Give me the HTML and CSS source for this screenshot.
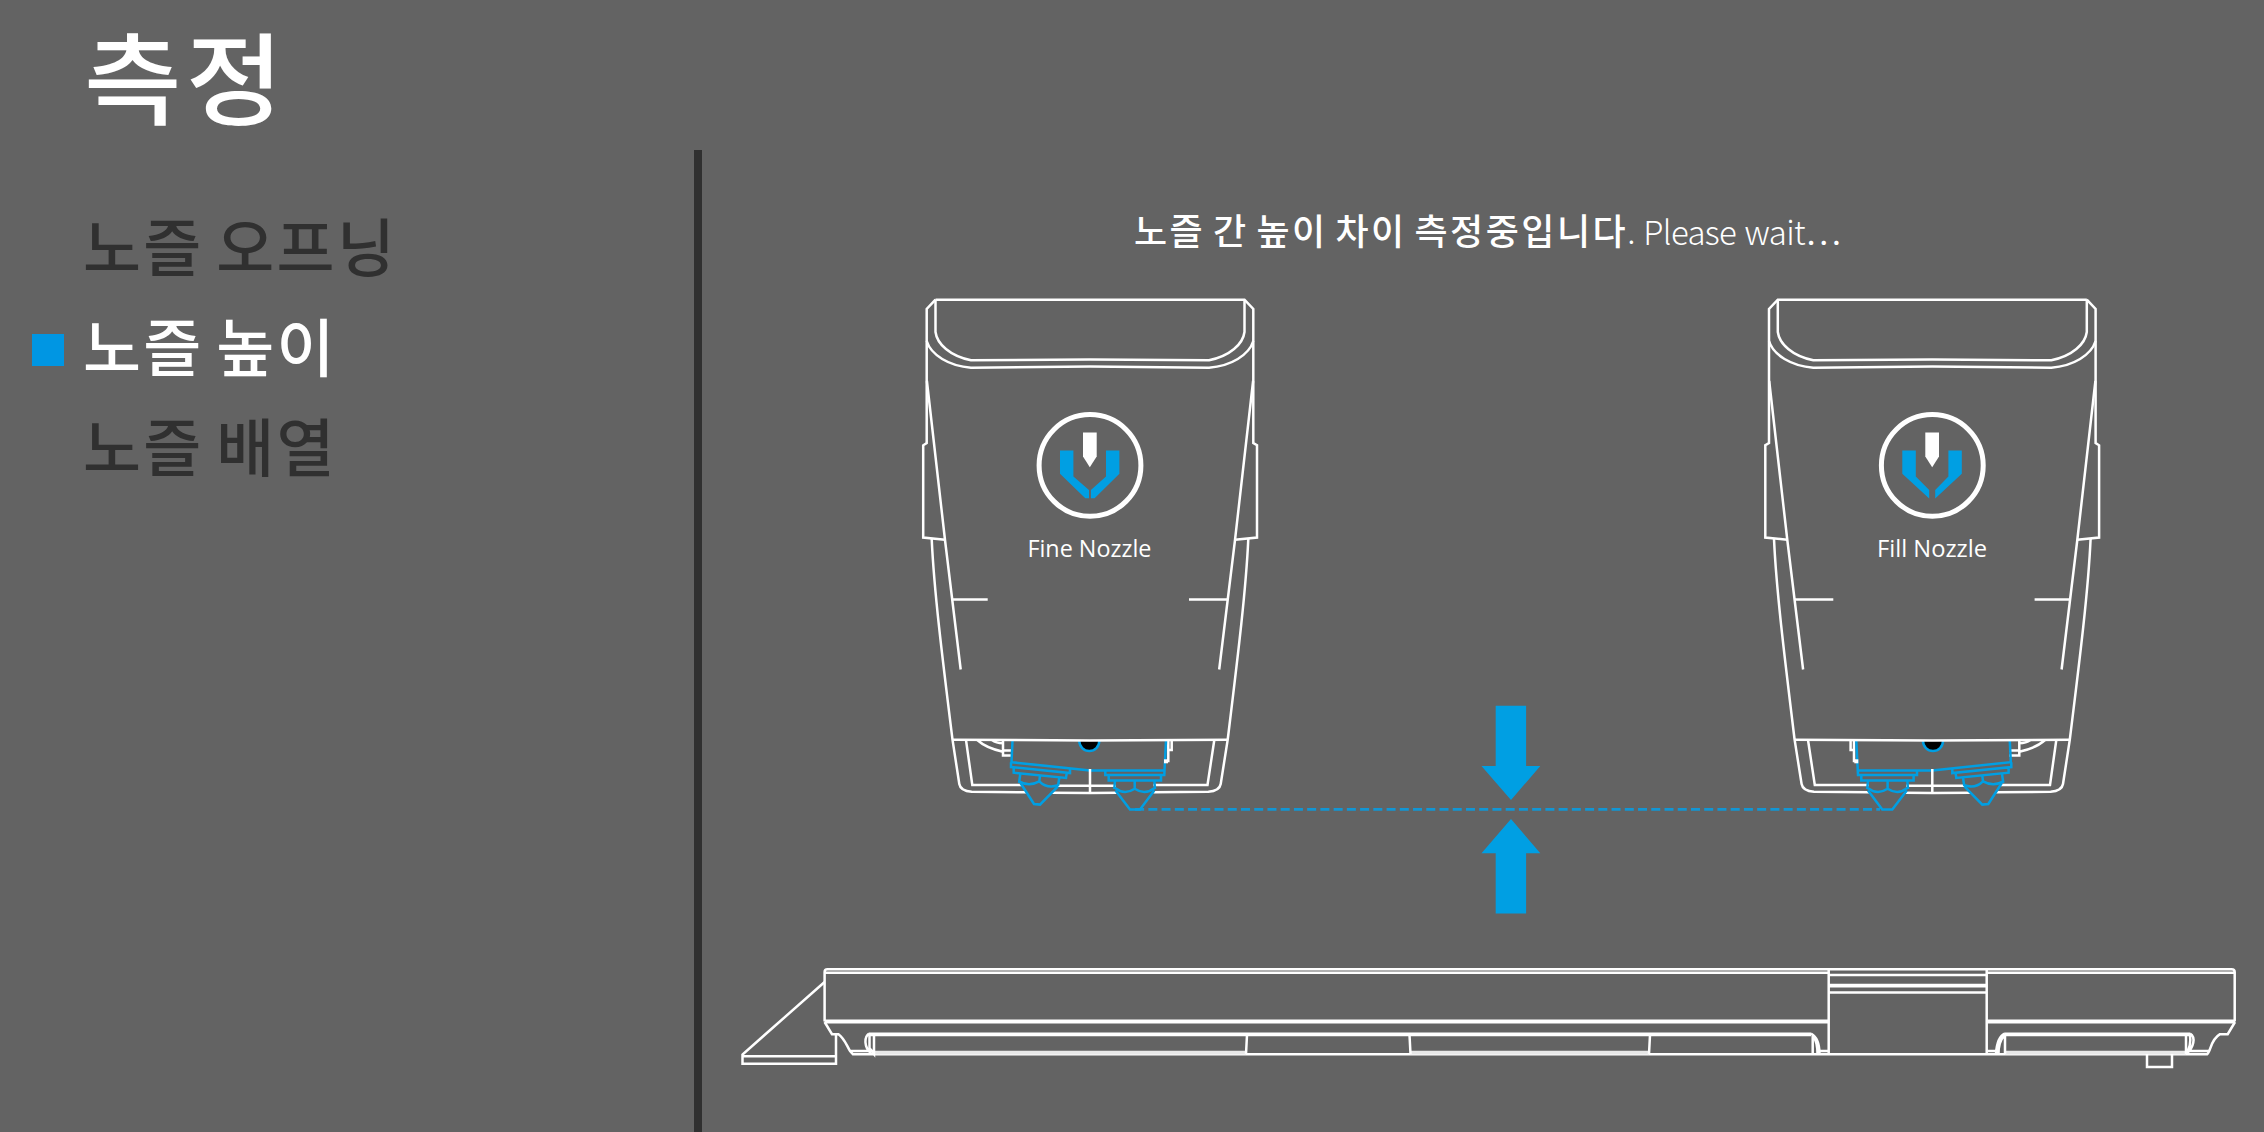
FILE: index.html
```html
<!DOCTYPE html>
<html lang="ko">
<head>
<meta charset="utf-8">
<title>측정</title>
<link rel="stylesheet" href="styles.css">
</head>
<body>
<div class="screen">
  <header class="title-bar"><h1 class="title">측정</h1></header>
  <div class="content">
    <nav class="steps">
      <ul class="step-list">
        <li class="step"><span class="marker"></span><span class="step-name">노즐 오프닝</span></li>
        <li class="step step-active"><span class="marker"></span><span class="step-name">노즐 높이</span></li>
        <li class="step"><span class="marker"></span><span class="step-name">노즐 배열</span></li>
      </ul>
    </nav>
    <main class="stage">
      <p class="status"><span class="status-ko">노즐 간 높이 차이 측정중입니다</span><span class="status-en">. Please wait<span class="dots">…</span></span></p>
      <svg class="diagram" viewBox="702 280 1562 852" width="1562" height="852">
        <defs>
          <g id="head">
            <g class="line">
              <path d="M935.5 299.7H1244.5L1253.3 309V443L1257 445.3V537.5L1235 539.7M935.5 299.7L926.7 309V443L923.2 445.3V537.5L945 539.7"/>
              <path d="M935.5 299.7V332C937 344 950 356 971 360.3L1090 359.6L1209 360.3C1230 356 1243 344 1244.5 332V299.7"/>
              <path d="M926.7 341C931 355 949 366 971 367.7L1090 366.6L1209 367.7C1231 366 1249 355 1253.3 341"/>
              <path d="M926.9 381L945 540L960.7 669.5M1253.1 381L1235 540L1219.2 669.5"/>
              <path d="M931.7 539C934 590 942 655 952.5 739.7L959.3 784Q960.5 791 971.7 791.7L1026.7 792.3M1248.3 539C1246 590 1238 655 1227.7 739.7L1220.7 784Q1219.5 791 1208.3 791.7L1153.3 792.3M1051.7 792.7L1090 793L1116.7 792.7"/>
              <path d="M952.5 599.4H987.7M1189 599.4H1227.7"/>
              <path d="M966 740L972.3 785H1022.3M1214.3 740L1207.5 785H1153.3M1057.7 785.8H1116"/>
              <path d="M977.3 740Q986 748 1003 751.7M992 740Q996 743 1003 743.3M1003 740V755.6H1013M1003 750.6H1013M1171.7 741V750H1169M1168.3 741V761H1164.5"/>
            </g>
            <path d="M1079.3 741A10 10 0 0 0 1099.3 741Z" fill="#000"/>
            <g class="blue-line">
              <path d="M1079.3 741A10 10 0 0 0 1099.3 741"/>
              <path d="M1012.5 741L1011.5 762.2L1090 770.4H1164.7M1166 741L1164.3 775H1105.3V770.4"/>
              <path d="M1011 762.2V767L1070 773V769M1013.7 767.5V772.7L1066 778L1066.7 773"/>
              <path d="M1020.3 774L1019 783M1059.3 777.7L1058 786M1040 775.7L1039.3 781.3M1019 781.3Q1029 787 1039.3 781.3Q1047 789 1058 785.3"/>
              <path d="M1020.5 783L1034 804L1040 804.6L1058 786.3"/>
              <path d="M1108.7 775V780.4H1161V775"/>
              <path d="M1115 780.4L1114.3 789M1154.3 780.4L1155 789M1134.7 780.4V788.7M1115 788Q1124.5 795.5 1134.7 788.7Q1145 795.5 1154.7 788"/>
              <path d="M1115.5 790.5L1130 809.4H1140L1154.3 790.5"/>
            </g>
            <path class="line" d="M952.5 739.7L1090 740.4L1227.7 739.7M1090 769V793"/>
            <path class="line joint" d="M1164 761.3H1168"/>
          </g>
        </defs>

        <path class="guide" d="M1135.1 809.4H1880"/>
        <use href="#head"/>
        <use href="#head" transform="translate(3022.3 0) scale(-1 1)"/>

        <g>
          <circle class="ring" cx="1090" cy="465.4" r="50.9"/>
          <path fill="#fff" d="M1083 432.4H1096.7V456.6L1089.8 467.2L1083 456.6Z"/>
          <path class="blue" d="M1060 450.4H1073.4V476.4L1089 490V498.2H1085.3L1060 473.8ZM1119.4 450.4H1106V476.4L1090.9 490V498.2H1094.6L1119.4 473.8Z"/>
          <text class="label" x="1027.4" y="557" textLength="124" lengthAdjust="spacingAndGlyphs">Fine Nozzle</text>
        </g>
        <g>
          <circle class="ring" cx="1932.3" cy="465.4" r="50.9"/>
          <path fill="#fff" d="M1925.3 432.4H1939V456.6L1932.2 467.2L1925.3 456.6Z"/>
          <path class="blue" d="M1902.3 450.4H1915.8V476.4L1929.2 490V498.6L1902.3 473.8ZM1961.8 450.4H1948.4V476.4L1935.2 490V498.6L1961.8 473.8Z"/>
          <text class="label" x="1877" y="557" textLength="110" lengthAdjust="spacingAndGlyphs">Fill Nozzle</text>
        </g>

        <path class="blue" d="M1495.7 705.7H1526.1V766H1540.3L1511 800L1481.5 766H1495.7Z"/>
        <path class="blue" d="M1511 819L1540.3 853.3H1526.1V913.4H1495.7V853.3H1481.5Z"/>

        <g class="line bed">
          <path d="M824.6 982L742.5 1054.5V1063.7H836V1034M742.5 1056.3H836"/>
          <path d="M824.6 1021.5V972Q824.6 969.3 827.5 969.3H2231.5Q2234.7 969.3 2234.7 972V1021.5M825 972.8H1828.5M1987 972.8H2234.5"/>
          <path class="thick" d="M824.6 1021.5H1828.5M1987 1021.5H2235"/>
          <path d="M824.6 1022L832 1034.2H838.5C844 1038 846 1044 850 1051L853 1054.3H2207C2211 1052 2210 1040 2220 1034.2H2227.7L2235 1022"/>
          <path d="M850 1051H873M1818 1051H1828M1987 1051H1997M2189 1051H2209"/>
          <path class="thick" d="M869 1034.4H1811M2005 1034.4H2190"/>
          <path class="thick soft" d="M873 1052.7H1246M1410 1052.7H1649M2005 1052.7H2186"/>
          <path d="M869 1033.5C864 1037 864 1048 871 1053M869.5 1035V1048L874 1054V1035M1247 1035L1246 1054"/>
          <path d="M1409.5 1035L1410.5 1054M1650 1035L1649 1054"/>
          <path d="M1811 1033.5Q1819.5 1038 1819.5 1054M1812.7 1035V1054M1813 1035Q1817.5 1042 1817.5 1054"/>
          <path d="M2005 1033.5Q1997 1037 1996 1054M2005 1035V1054M2004 1036Q1998.5 1042 1998.5 1054"/>
          <path d="M2190 1033.5C2196 1037 2194 1048 2186 1054M2190 1035Q2191.5 1046 2186 1054M2186 1035V1054"/>
          <path d="M1828.7 969V1054M1986.7 969V1054M1828.7 975H1986.7M1828.7 992.5H1986.7"/>
          <path class="thick" d="M1828.7 985.7H1986.7"/>
          <path d="M2147 1054V1067H2172V1054"/>
        </g>
      </svg>
    </main>
  </div>
</div>
</body>
</html>
```
FILE: styles.css
```css
* { box-sizing: border-box; }

body {
  margin: 0;
  background: #636363;
  color: #fff;
  font-family: "Noto Sans CJK KR", sans-serif;
}

.screen {
  display: flex;
  flex-direction: column;
  width: 2264px;
  height: 1132px;
  overflow: hidden;
}

.title-bar { height: 150px; padding-left: 84px; }

.title {
  margin: 0;
  font-size: 100px;
  font-weight: 500;
  line-height: 148px;
  letter-spacing: 4px;
  transform: scaleX(1.06);
  transform-origin: left;
}

.content { display: flex; height: 982px; }

.steps {
  width: 702px;
  padding: 50px 0 0 32px;
  border-right: 8px solid #303030;
}

.step-list { margin: 0; padding: 0; list-style: none; }

.step {
  display: flex;
  align-items: center;
  gap: 19px;
  height: 100px;
  font-size: 63px;
  font-weight: 500;
  line-height: 87px;
  letter-spacing: 2.4px;
  word-spacing: -7.5px;
  color: #303030;
}

.step-name { padding-bottom: 13px; }
.marker { width: 32px; height: 32px; }
.step-active { color: #fff; }
.step-active .marker { background: #0096e3; }

.stage { flex: 1; }

.status {
  height: 130px;
  margin: 0;
  padding: 52px 0 0 432px;
  font-size: 36px;
  line-height: 54px;
  white-space: nowrap;
}

.status-ko { font-weight: 500; letter-spacing: 2.5px; word-spacing: -4.8px; }
.status-en { margin-left: -1px; font-size: 33px; font-weight: 300; letter-spacing: -0.7px; }
.dots { font-size: 38px; line-height: 0; vertical-align: -12px; }

.diagram { display: block; }

.line { fill: none; stroke: #fff; stroke-width: 2.5; }
.blue-line { fill: none; stroke: #009fe3; stroke-width: 2.5; }
.joint { stroke-width: 4; }
.thick { stroke-width: 3.8; }
.soft { stroke: #e8e8e8; }
.blue { fill: #009fe3; }
.ring { fill: none; stroke: #fff; stroke-width: 5; }
.guide { fill: none; stroke: #1296d4; stroke-width: 2.6; stroke-dasharray: 9 4.235; }

.label {
  fill: #fff;
  font-family: "Open Sans", "Noto Sans", sans-serif;
  font-size: 23.2px;
}
```
